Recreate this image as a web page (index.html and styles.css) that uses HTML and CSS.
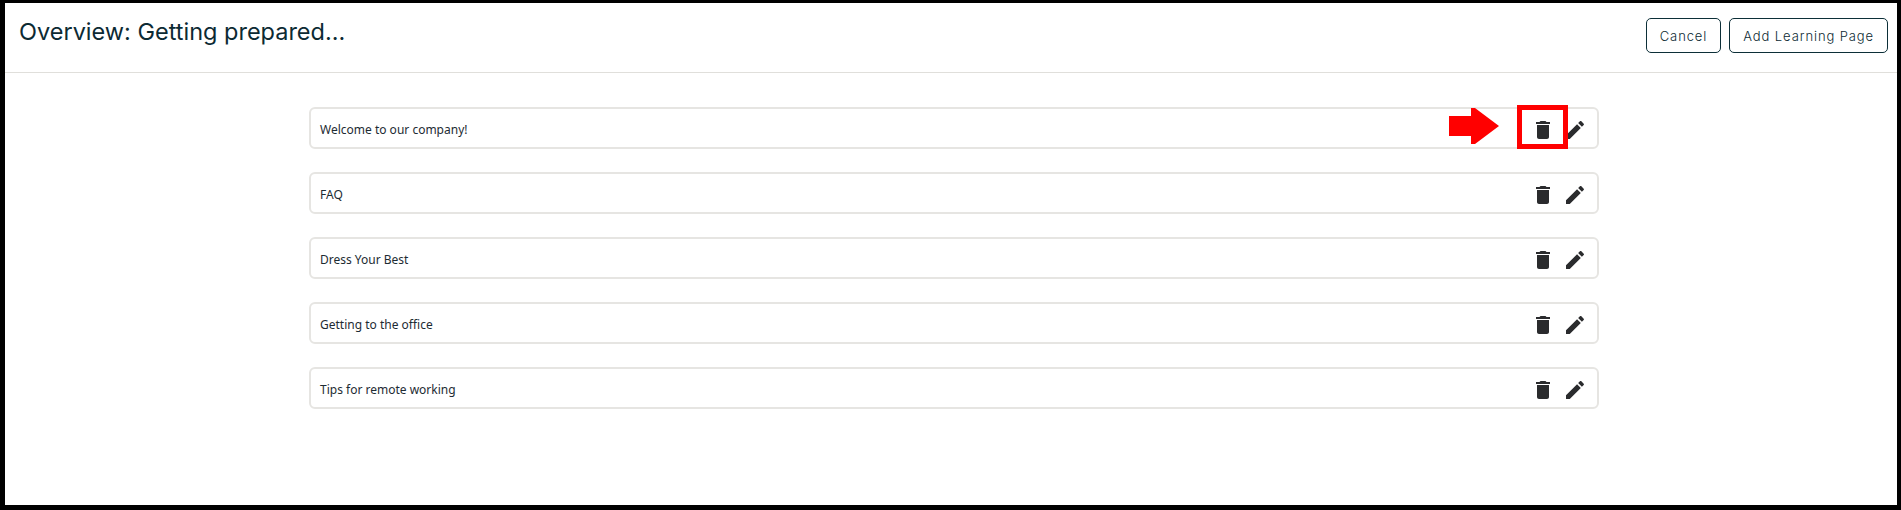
FILE: index.html
```html
<!DOCTYPE html>
<html lang="en">

<head>
    <meta charset="UTF-8">
    <title>Overview: Getting prepared...</title>
    <link rel="stylesheet" href="styles.css">
</head>

<body>
    <div class="page">
        <div class="top">
            <h1 class="title">Overview: Getting prepared...</h1>
            <div class="actions">
                <button class="btn">Cancel</button>
                <button class="btn">Add Learning Page</button>
            </div>
        </div>
        <ul class="list">
            <li class="item">
                <p class="item_name">Welcome to our company!</p>
                <div class="icons">
                    <svg class="icon" viewBox="0 0 24 24"><path d="M6 19c0 1.1.9 2 2 2h8c1.1 0 2-.9 2-2V7H6v12zM19 4h-3.5l-1-1h-5l-1 1H5v2h14V4z"/></svg>
                    <svg class="icon" viewBox="0 0 24 24"><path d="M3 17.25V21h3.75L17.81 9.94l-3.75-3.75L3 17.25zM20.71 7.04c.39-.39.39-1.02 0-1.41l-2.34-2.34c-.39-.39-1.02-.39-1.41 0l-1.83 1.83 3.75 3.75 1.83-1.83z"/></svg>
                </div>
                <svg class="arrow" viewBox="0 0 50 36"><polygon points="0,8 22,8 22,0 26,0 50,18 26,36 22,36 22,28 0,28"/></svg>
                <div class="red_box"></div>
            </li>
            <li class="item">
                <p class="item_name">FAQ</p>
                <div class="icons">
                    <svg class="icon" viewBox="0 0 24 24"><path d="M6 19c0 1.1.9 2 2 2h8c1.1 0 2-.9 2-2V7H6v12zM19 4h-3.5l-1-1h-5l-1 1H5v2h14V4z"/></svg>
                    <svg class="icon" viewBox="0 0 24 24"><path d="M3 17.25V21h3.75L17.81 9.94l-3.75-3.75L3 17.25zM20.71 7.04c.39-.39.39-1.02 0-1.41l-2.34-2.34c-.39-.39-1.02-.39-1.41 0l-1.83 1.83 3.75 3.75 1.83-1.83z"/></svg>
                </div>
            </li>
            <li class="item">
                <p class="item_name">Dress Your Best</p>
                <div class="icons">
                    <svg class="icon" viewBox="0 0 24 24"><path d="M6 19c0 1.1.9 2 2 2h8c1.1 0 2-.9 2-2V7H6v12zM19 4h-3.5l-1-1h-5l-1 1H5v2h14V4z"/></svg>
                    <svg class="icon" viewBox="0 0 24 24"><path d="M3 17.25V21h3.75L17.81 9.94l-3.75-3.75L3 17.25zM20.71 7.04c.39-.39.39-1.02 0-1.41l-2.34-2.34c-.39-.39-1.02-.39-1.41 0l-1.83 1.83 3.75 3.75 1.83-1.83z"/></svg>
                </div>
            </li>
            <li class="item">
                <p class="item_name">Getting to the office</p>
                <div class="icons">
                    <svg class="icon" viewBox="0 0 24 24"><path d="M6 19c0 1.1.9 2 2 2h8c1.1 0 2-.9 2-2V7H6v12zM19 4h-3.5l-1-1h-5l-1 1H5v2h14V4z"/></svg>
                    <svg class="icon" viewBox="0 0 24 24"><path d="M3 17.25V21h3.75L17.81 9.94l-3.75-3.75L3 17.25zM20.71 7.04c.39-.39.39-1.02 0-1.41l-2.34-2.34c-.39-.39-1.02-.39-1.41 0l-1.83 1.83 3.75 3.75 1.83-1.83z"/></svg>
                </div>
            </li>
            <li class="item">
                <p class="item_name">Tips for remote working</p>
                <div class="icons">
                    <svg class="icon" viewBox="0 0 24 24"><path d="M6 19c0 1.1.9 2 2 2h8c1.1 0 2-.9 2-2V7H6v12zM19 4h-3.5l-1-1h-5l-1 1H5v2h14V4z"/></svg>
                    <svg class="icon" viewBox="0 0 24 24"><path d="M3 17.25V21h3.75L17.81 9.94l-3.75-3.75L3 17.25zM20.71 7.04c.39-.39.39-1.02 0-1.41l-2.34-2.34c-.39-.39-1.02-.39-1.41 0l-1.83 1.83 3.75 3.75 1.83-1.83z"/></svg>
                </div>
            </li>
        </ul>
    </div>
</body>

</html>
```

FILE: styles.css
```css
* {
    margin: 0;
    padding: 0;
    box-sizing: border-box;
    list-style: none;
}

body {
    height: 510px;
    background: #000;
    padding: 3px 4px 5px 5px;
    overflow: hidden;
}

.page {
    height: 100%;
    background: #fff;
}

.top {
    height: 70px;
    display: flex;
    justify-content: space-between;
    align-items: flex-start;
    padding: 15px 9px 0 14px;
    border-bottom: 1px solid #e0dfdb;
}

.title {
    font-family: "Inter", "Liberation Sans", sans-serif;
    font-size: 23.5px;
    font-weight: 400;
    line-height: 28px;
    color: #0c2a33;
}

.actions {
    display: flex;
    gap: 8px;
}

.btn {
    height: 35px;
    padding: 0 13px;
    background: #fff;
    border: 1px solid #0c2f38;
    border-radius: 5px;
    font-family: "Inter", "Liberation Sans", sans-serif;
    font-size: 13px;
    font-weight: 300;
    letter-spacing: 0.9px;
    color: #0c2a33;
}

.list {
    margin-left: 304px;
    width: 1290px;
    padding-top: 34px;
    display: flex;
    flex-direction: column;
    gap: 23px;
}

.item {
    position: relative;
    height: 42px;
    display: flex;
    justify-content: space-between;
    align-items: center;
    padding: 0 10px 0 9px;
    border: 2px solid #e6e5e2;
    border-radius: 6px;
}

.item_name {
    padding-top: 2px;
    font-family: "Noto Sans", "Open Sans", sans-serif;
    font-size: 12px;
    color: #1d2b33;
}

.icons {
    display: flex;
    gap: 8px;
    padding-top: 4px;
}

.icon {
    width: 24px;
    height: 24px;
    fill: #2a2b2d;
    display: block;
}

/* red callout that sits over the first row */
.arrow {
    position: absolute;
    left: 1138px;
    top: -1px;
    width: 50px;
    height: 36px;
    fill: #f00;
}

.red_box {
    position: absolute;
    left: 1206px;
    top: -4px;
    width: 51px;
    height: 44px;
    border: 5px solid #f00;
}
```
